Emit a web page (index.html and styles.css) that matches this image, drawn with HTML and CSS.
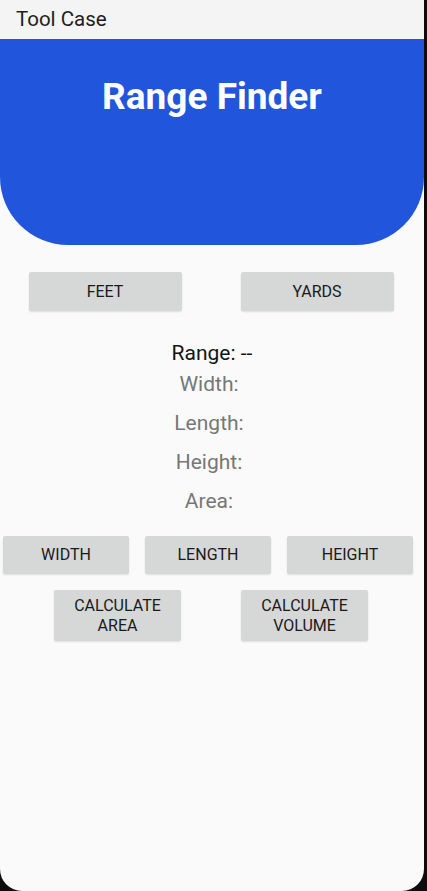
FILE: index.html
```html
<!DOCTYPE html>
<html>
<head>
<meta charset="utf-8">
<link rel="stylesheet" href="styles.css">
</head>
<body>
<div class="screen">
  <div class="appbar">Tool Case</div>
  <div class="hero"><h1 class="hero-title">Range Finder</h1></div>
  <div class="units">
    <div class="unit-cell"><button class="btn btn-unit">FEET</button></div>
    <div class="unit-cell"><button class="btn btn-unit">YARDS</button></div>
  </div>
  <div class="readout">
    <div class="range">Range: --</div>
    <div class="label">Width:</div>
    <div class="label">Length:</div>
    <div class="label">Height:</div>
    <div class="label">Area:</div>
  </div>
  <div class="dims">
    <button class="btn btn-dim">WIDTH</button>
    <button class="btn btn-dim">LENGTH</button>
    <button class="btn btn-dim">HEIGHT</button>
  </div>
  <div class="calcs">
    <button class="btn btn-calc">CALCULATE<br>AREA</button>
    <button class="btn btn-calc">CALCULATE<br>VOLUME</button>
  </div>
</div>
</body>
</html>
```
FILE: styles.css
```css
html, body {
  margin: 0;
  padding: 0;
  background: #0d0d0d;
}
body {
  font-family: Roboto, "Noto Sans", sans-serif;
}
.screen {
  width: 424px;
  height: 891px;
  background: #fafafa;
  border-bottom-left-radius: 22px;
  border-bottom-right-radius: 22px;
  overflow: hidden;
}
.appbar {
  height: 39px;
  box-sizing: border-box;
  background: #f4f4f4;
  color: #1e1e1e;
  font-size: 20.5px;
  line-height: 39px;
  padding-left: 16px;
}
.hero {
  height: 206px;
  background: #2156dc;
  border-bottom-left-radius: 68px;
  border-bottom-right-radius: 68px;
  padding-top: 36px;
  box-sizing: border-box;
}
.hero-title {
  margin: 0;
  text-align: center;
  color: #ffffff;
  font-size: 37px;
  font-weight: 700;
  line-height: 44px;
}
.btn {
  font-family: Roboto, "Noto Sans", sans-serif;
  font-size: 16px;
  font-weight: 400;
  color: #1a1a1a;
  background: #d6d7d7;
  border: none;
  border-radius: 2px;
  box-shadow: 0 1px 2px rgba(0,0,0,0.12);
  padding: 0;
  line-height: 20px;
}
.units {
  display: flex;
  margin-top: 27px;
}
.unit-cell {
  flex: 1;
  display: flex;
  justify-content: center;
}
.btn-unit {
  width: 153px;
  height: 39px;
  margin-left: -2px;
}
.readout {
  margin-top: 31px;
  display: flex;
  flex-direction: column;
  align-items: center;
}
.range {
  font-size: 21px;
  color: #141414;
  line-height: 22px;
}
.label {
  font-size: 21px;
  color: #777777;
  line-height: 22px;
  margin-top: 17px;
  padding-right: 6px;
}
.range + .label {
  margin-top: 9px;
}
.dims {
  display: flex;
  gap: 16px;
  padding-left: 3px;
  margin-top: 24px;
}
.btn-dim {
  width: 126px;
  height: 38px;
}
.calcs {
  display: flex;
  gap: 60px;
  padding-left: 54px;
  margin-top: 16px;
}
.btn-calc {
  width: 127px;
  height: 51px;
}
```
